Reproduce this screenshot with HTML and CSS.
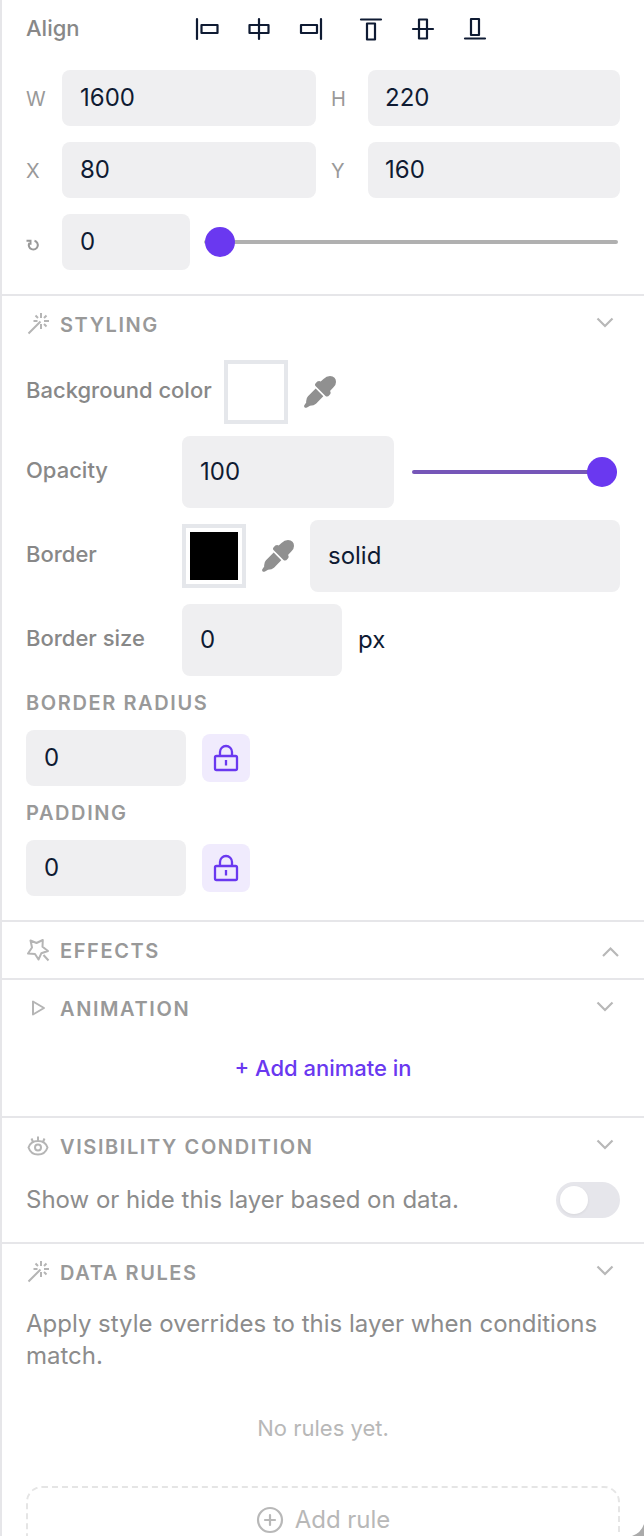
FILE: index.html
```html
<!DOCTYPE html>
<html lang="en">
<head>
<meta charset="utf-8">
<title>Layer properties</title>
<link rel="stylesheet" href="styles.css">
</head>
<body>
<svg class="defs" width="0" height="0">
  <symbol id="wand" viewBox="0 0 24 24"><path d="M2.500 21.500L14.500 9.500M15 1v5M15 12v5M7.500 9h4M18 9h5M9.500 3.500l2.500 2.500M20.500 3.500L18 6M20.500 14.500L18 12"/></symbol>
  <symbol id="down" viewBox="0 0 30 30"><path d="M7.500 9.500l7.500 7.500 7.500-7.500"/></symbol>
  <symbol id="dropper" viewBox="0 0 32 32"><path d="M19.500 3Q22.500 0 26 0Q32 .300 32 6Q32 9 29.500 11.300L26 15Q27.500 17 25.500 19Q23.500 21.500 21.500 20L11.500 10Q10.500 8.500 11.500 7.500Q14 4 16.700 5.500ZM11.700 12.500L19.300 20.200L12 27.700Q10 29.700 6 29.700L3 31.500Q1.300 32.300 .500 31.200Q-.300 30.200 .500 29L2.200 26.500Q1.800 22.300 4 20.200Z"/></symbol>
  <symbol id="lock" viewBox="0 0 26 28"><rect x="2" y="12" width="22" height="14" rx="1.500"/><path d="M7 12V8a6 6 0 0 1 12 0v4M13 16v5.500"/></symbol>
</svg>
<main class="panel">
  <section class="geometry">
    <div class="align-row">
      <span class="label">Align</span>
      <div class="align-icons">
        <svg viewBox="0 0 24 24"><path d="M2 2v20M6.500 8h16v8H6.500z"/></svg>
        <svg viewBox="0 0 24 24"><path d="M12 2v20M2.500 8h19v8H2.500z"/></svg>
        <svg viewBox="0 0 24 24"><path d="M22 2v20M2 8h16v8H2z"/></svg>
        <svg class="group-start" viewBox="0 0 24 24"><path d="M2 2.500h20M8 6.500h8v16H8z"/></svg>
        <svg viewBox="0 0 24 24"><path d="M2 12h20M8 2.500h8v19H8z"/></svg>
        <svg viewBox="0 0 24 24"><path d="M2 21.500h20M8 2h8v16H8z"/></svg>
      </div>
    </div>
    <div class="geo-row"><span class="axis">W</span><div class="field">1600</div><span class="axis">H</span><div class="field second">220</div></div>
    <div class="geo-row"><span class="axis">X</span><div class="field">80</div><span class="axis">Y</span><div class="field second">160</div></div>
    <div class="rotate-row">
      <span class="axis"><svg class="rotate" viewBox="0 0 14 14"><path d="M8.500 2.700A4.500 4.500 0 1 1 3.300 5M.500 2.800h4v4"/></svg></span>
      <div class="field">0</div>
      <div class="slider"><i class="thumb"></i></div>
    </div>
  </section>

  <section class="section">
    <header class="head"><svg class="icon"><use href="#wand"/></svg><h2>Styling</h2><svg class="chev"><use href="#down"/></svg></header>
    <div class="styling">
      <div class="row bg-row"><span class="label">Background color</span><div class="swatch"></div><svg class="dropper"><use href="#dropper"/></svg></div>
      <div class="row"><span class="label fixed">Opacity</span><div class="field tall opacity">100</div><div class="slider full"><i class="thumb"></i></div></div>
      <div class="row"><span class="label fixed">Border</span><div class="swatch"><i class="ink"></i></div><svg class="dropper"><use href="#dropper"/></svg><div class="field tall grow">solid</div></div>
      <div class="row"><span class="label fixed">Border size</span><div class="field tall size">0</div><span class="unit">px</span></div>
      <h3>Border radius</h3>
      <div class="lock-row"><div class="field size">0</div><button class="lock"><svg><use href="#lock"/></svg></button></div>
      <h3>Padding</h3>
      <div class="lock-row"><div class="field size">0</div><button class="lock"><svg><use href="#lock"/></svg></button></div>
    </div>
  </section>

  <section class="section">
    <header class="head"><svg class="icon" viewBox="0 0 24 24"><path d="M4.500 2.500L10.500 5L16.800 2L16.500 8.800L22 13L15.300 15.300L12.500 21.500L9 16L2 15.500L6 9.500ZM17.500 17l5 5.500"/></svg><h2>Effects</h2><svg class="chev up" viewBox="0 0 30 30"><path d="M13 21l7.500-7.500 7.500 7.500"/></svg></header>
  </section>

  <section class="section">
    <header class="head"><svg class="icon" viewBox="0 0 24 24"><path d="M7 5.500v13L18 12z"/></svg><h2>Animation</h2><svg class="chev"><use href="#down"/></svg></header>
    <div class="add-animate">+ Add animate in</div>
  </section>

  <section class="section">
    <header class="head"><svg class="icon" viewBox="0 0 24 24"><path d="M2.500 13.500C4 9 8 7 12 7S20 9 21.500 13.500C20 18 16 20.500 12 20.500S4 18 2.500 13.500ZM12 2.500V7M5.500 4.500L7 8M18.500 4.500L17 8"/><circle cx="12" cy="13.500" r="3"/></svg><h2>Visibility condition</h2><svg class="chev"><use href="#down"/></svg></header>
    <div class="visibility"><span>Show or hide this layer based on data.</span><div class="toggle"><i class="knob"></i></div></div>
  </section>

  <section class="section">
    <header class="head"><svg class="icon"><use href="#wand"/></svg><h2>Data rules</h2><svg class="chev"><use href="#down"/></svg></header>
    <div class="rules">
      <p>Apply style overrides to this layer when conditions match.</p>
      <div class="empty">No rules yet.</div>
      <div class="add-rule"><svg viewBox="0 0 28 28"><circle cx="14" cy="14" r="12"/><path d="M14 9v10M9 14h10"/></svg><span>Add rule</span></div>
    </div>
  </section>
  <svg class="corner" viewBox="0 0 12 12"><path d="M12 0Q9 9 0 12H12Z"/></svg>
</main>
</body>
</html>
```

FILE: styles.css
```css
* { box-sizing: border-box; }
body { margin: 0; background: #fff; font-family: Inter, "Liberation Sans", sans-serif; }
svg { display: block; flex: none; fill: none; }
.defs { position: absolute; }
.panel { position: relative; height: 1536px; overflow: hidden; border-left: 2px solid #e6e6e9; font-size: 24px; color: #0f1b33; }
.label { font-size: 22px; font-weight: 500; color: #888; line-height: 28px; white-space: nowrap; }

.geometry { padding: 14px 24px 24px; display: flex; flex-direction: column; gap: 16px; }
.align-row { display: flex; height: 40px; padding-bottom: 12px; align-items: center; }
.align-row .label { width: 169px; }
.align-icons { display: flex; gap: 28px; padding-top: 2px; }
.align-icons svg { width: 24px; height: 24px; stroke: #0f1b33; stroke-width: 2.200; stroke-linejoin: round; stroke-linecap: round; }
.align-icons .group-start { margin-left: 8px; }
.geo-row { display: grid; grid-template-columns: 36px 254px 52px 252px; align-items: center; }
.rotate-row { display: grid; grid-template-columns: 36px 128px 414px; align-items: center; }
.rotate-row .slider { margin-left: 14px; }
.axis { font-size: 20px; color: #999; line-height: 28px; padding-top: 2px; }
.geo-row .axis:nth-child(3) { padding-left: 15px; }
.rotate { width: 14px; height: 14px; margin-top: 3px; stroke: #999; stroke-width: 2; }
.field { height: 56px; padding: 0 18px; border-radius: 8px; background: #efeff1; line-height: 55px; }
.field.second { padding-left: 17px; }
.field.tall { height: 72px; line-height: 71px; }
.slider { position: relative; width: 414px; height: 4px; border-radius: 2px; background: #b0b0b0; }
.thumb { position: absolute; left: 1px; top: -13px; width: 30px; height: 30px; border-radius: 50%; background: #6a38f0; }
.slider.full { width: 205px; margin-left: 18px; background: #7656b8; }
.slider.full .thumb { left: 175px; }

.section { border-top: 2px solid #e6e6e9; }
.head { height: 56px; padding: 0 24px; display: flex; align-items: center; }
.icon { width: 24px; height: 24px; stroke: #b5b5b5; stroke-width: 2; stroke-linejoin: round; }
h2, h3 { margin: 0; font-size: 20px; font-weight: 600; letter-spacing: 1.600px; text-transform: uppercase; color: #999; line-height: 28px; }
h2 { margin-left: 10px; padding-top: 1px; }
.chev { width: 30px; height: 30px; margin-left: auto; stroke: #b8b8b8; stroke-width: 2.200; }

.styling { padding: 8px 24px 24px; }
.row { display: flex; align-items: center; height: 72px; margin-bottom: 12px; }
.bg-row { height: 64px; }
.row .label { padding-bottom: 4px; }
.label.fixed { width: 156px; }
.swatch { width: 64px; height: 64px; border: 4px solid #e5e7eb; padding: 4px; background: #fff; }
.bg-row .swatch { margin-left: 12px; }
.ink { display: block; height: 48px; background: #000; }
.dropper { width: 32px; height: 32px; margin: 0 16px; fill: #909090; }
.opacity { width: 212px; }
.size { width: 160px; }
.grow { flex: 1; }
.unit { margin-left: 16px; padding-bottom: 2px; }
.styling h3 { margin: 13px 0; }
.lock-row { display: flex; align-items: center; gap: 16px; }
.lock { width: 48px; height: 48px; border: 0; border-radius: 8px; padding: 0; background: #f0ebfd; display: grid; place-items: center; }
.lock svg { width: 26px; height: 28px; stroke: #6a38f0; stroke-width: 2.300; }

.add-animate { height: 80px; padding-top: 18px; line-height: 28px; text-align: center; font-size: 22px; font-weight: 500; color: #6a38f0; }
.visibility { height: 68px; padding: 8px 24px 24px; display: flex; justify-content: space-between; align-items: center; color: #8c8c8c; }
.visibility span { padding-bottom: 2px; }
.toggle { width: 64px; height: 36px; padding: 4px; border-radius: 18px; background: #e6e6eb; }
.knob { display: block; width: 28px; height: 28px; border-radius: 50%; background: #fff; box-shadow: 0 1px 3px #0001; }
.rules { padding: 8px 24px; color: #8c8c8c; }
.rules p { margin: 0; line-height: 32px; }
.empty { padding: 41px 0 43px; line-height: 30px; font-size: 22px; text-align: center; color: #b8b8b8; }
.add-rule { height: 68px; border: 2px dashed #e5e5e5; border-radius: 16px; display: flex; align-items: center; justify-content: center; gap: 11px; color: #b8b8b8; }
.add-rule svg { width: 28px; height: 28px; stroke: #b8b8b8; stroke-width: 2.200; stroke-linecap: round; }
.add-rule span { padding-bottom: 2px; }
.corner { position: absolute; right: 0; bottom: 0; width: 12px; height: 12px; fill: #aaa; }
```
